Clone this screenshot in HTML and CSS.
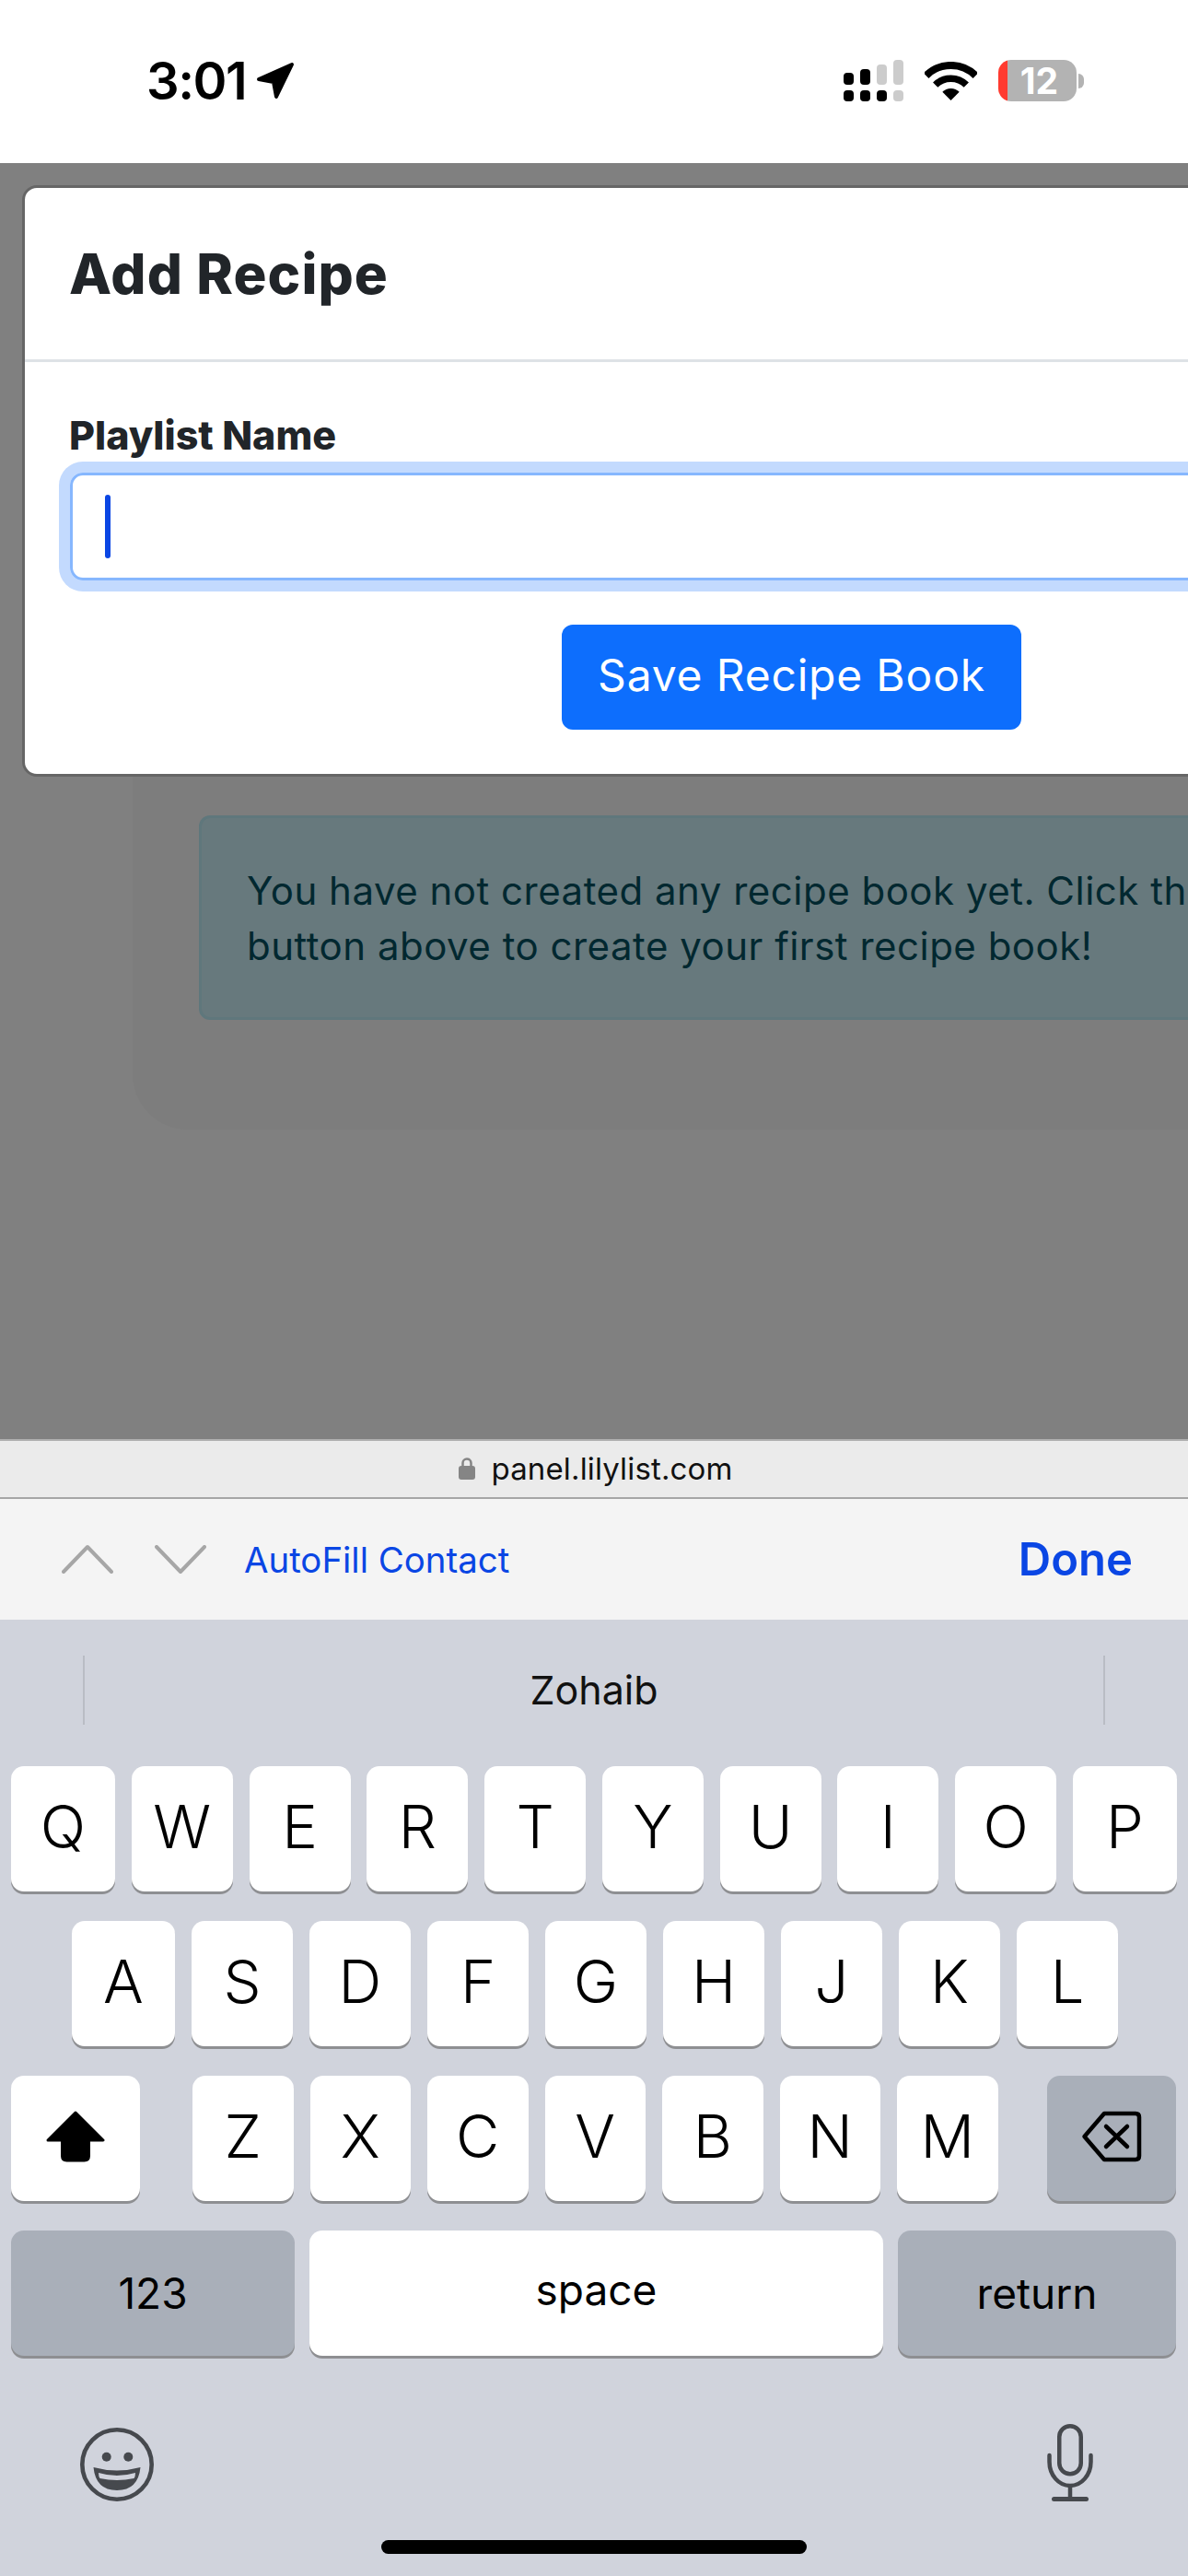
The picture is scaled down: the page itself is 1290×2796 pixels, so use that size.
FILE: index.html
```html
<!DOCTYPE html>
<html lang="en">
  <head>
    <meta charset="UTF-8" />
    <meta name="viewport" content="width=device-width, initial-scale=1.0" />
    <title>Add Recipe</title>
    <link rel="stylesheet" href="styles.css">
  </head>
  <body>
    <!-- STATUS BAR -->
    <header class="status-bar">
      <div class="status-left">
        <span class="time">3:01</span>
        <svg class="location" width="44" height="44" viewBox="0 0 44 44">
          <path d="M4 20 L40 4 L23 39 L20 23 Z" fill="#000" stroke="#000" stroke-width="4" stroke-linejoin="round" />
        </svg>
      </div>
      <div class="status-right">
        <svg class="signal" width="65" height="45" viewBox="0 0 65 45">
          <rect x="0" y="33" width="11" height="12" rx="4" fill="#000" />
          <rect x="18" y="33" width="11" height="12" rx="4" fill="#000" />
          <rect x="36" y="33" width="11" height="12" rx="4" fill="#000" />
          <rect x="54" y="33" width="11" height="12" rx="4" fill="#ccc" />
          <rect x="0" y="14" width="11" height="13" rx="4" fill="#000" />
          <rect x="18" y="10" width="11" height="17" rx="4" fill="#000" />
          <rect x="36" y="5" width="11" height="22" rx="4" fill="#ccc" />
          <rect x="54" y="0" width="11" height="27" rx="4" fill="#ccc" />
        </svg>
        <svg class="wifi" width="57" height="42" viewBox="0 0 57 42">
          <path d="M1.6 15.1 A38 38 0 0 1 55.4 15.1" fill="none" stroke="#000" stroke-width="8" />
          <path d="M11.7 25.2 A23.75 23.75 0 0 1 45.3 25.2" fill="none" stroke="#000" stroke-width="7.5" />
          <path d="M28.5 42 L19.3 32.8 A13 13 0 0 1 37.7 32.8 Z" fill="#000" />
        </svg>
        <div class="battery">
          <div class="battery-body">12</div>
          <div class="battery-cap"></div>
        </div>
      </div>
    </header>

    <!-- PAGE BEHIND THE BACKDROP, WITH THE MODAL ON TOP -->
    <main class="page">
      <section class="panel">
        <div class="alert">
          You have not created any recipe book yet. Click the<br>
          button above to create your first recipe book!
        </div>
      </section>

      <div class="modal">
        <div class="modal-header">
          <h5 class="modal-title">Add Recipe</h5>
        </div>
        <div class="modal-body">
          <label class="form-label">Playlist Name</label>
          <div class="form-input"><span class="caret"></span></div>
          <div class="modal-footer">
            <button class="btn-save">Save Recipe Book</button>
          </div>
        </div>
      </div>
    </main>

    <!-- SAFARI URL BAR AND FORM TOOLBAR -->
    <div class="url-bar">
      <svg class="lock" width="18" height="25" viewBox="0 0 18 25">
        <path d="M4.5 12 V7 a4.5 4.5 0 0 1 9 0 V12" fill="none" stroke="#858585" stroke-width="2.5" />
        <rect x="0" y="10" width="18" height="15" rx="3" fill="#858585" />
      </svg>
      <span class="url-text">panel.lilylist.com</span>
    </div>
    <div class="toolbar">
      <svg class="chevron" width="56" height="32" viewBox="0 0 56 32">
        <path d="M2 30 L28 3 L54 30" fill="none" stroke="#a6a6a6" stroke-width="4" stroke-linecap="round" stroke-linejoin="round" />
      </svg>
      <svg class="chevron chevron-down" width="56" height="32" viewBox="0 0 56 32">
        <path d="M2 2 L28 29 L54 2" fill="none" stroke="#a6a6a6" stroke-width="4" stroke-linecap="round" stroke-linejoin="round" />
      </svg>
      <span class="autofill">AutoFill Contact</span>
      <span class="done">Done</span>
    </div>

    <!-- KEYBOARD -->
    <div class="keyboard">
      <div class="suggestions">
        <div class="suggestion">Zohaib</div>
      </div>
      <div class="rows">
        <div class="row row-1">
          <div class="key key-edge">Q</div>
          <div class="key">W</div>
          <div class="key">E</div>
          <div class="key">R</div>
          <div class="key">T</div>
          <div class="key">Y</div>
          <div class="key">U</div>
          <div class="key">I</div>
          <div class="key">O</div>
          <div class="key key-edge">P</div>
        </div>
        <div class="row row-2">
          <div class="key key-a">A</div>
          <div class="key">S</div>
          <div class="key">D</div>
          <div class="key">F</div>
          <div class="key">G</div>
          <div class="key">H</div>
          <div class="key">J</div>
          <div class="key">K</div>
          <div class="key">L</div>
        </div>
        <div class="row row-3">
          <div class="key key-shift">
            <svg width="64" height="56" viewBox="0 0 64 56">
              <path d="M32 2 L62 32 H46.5 V49 q0 5 -5 5 H22.5 q-5 0 -5 -5 V32 H2 Z" fill="#000" stroke="#000" stroke-width="3" stroke-linejoin="round" />
            </svg>
          </div>
          <div class="letters">
            <div class="key">Z</div>
            <div class="key">X</div>
            <div class="key">C</div>
            <div class="key">V</div>
            <div class="key">B</div>
            <div class="key">N</div>
            <div class="key">M</div>
          </div>
          <div class="key key-delete">
            <svg width="66" height="56" viewBox="0 0 66 56">
              <path d="M3.5 28 L25 3 H59 Q63 3 63 7 V49 Q63 53 59 53 H25 Z" fill="none" stroke="#000" stroke-width="4.5" stroke-linejoin="round" />
              <path d="M27 17 L50 39 M50 17 L27 39" fill="none" stroke="#000" stroke-width="4.5" stroke-linecap="round" />
            </svg>
          </div>
        </div>
        <div class="row row-4">
          <div class="key key-num">123</div>
          <div class="key key-space">space</div>
          <div class="key key-return">return</div>
        </div>
      </div>
      <div class="bottom-icons">
        <svg class="emoji" width="80" height="80" viewBox="0 0 80 80">
          <circle cx="40" cy="40" r="37.7" fill="none" stroke="#46494e" stroke-width="4.6" />
          <circle cx="28.7" cy="31.7" r="5" fill="#46494e" />
          <circle cx="52.3" cy="31.7" r="5" fill="#46494e" />
          <path d="M14.5 43 Q40 50 65.5 43 Q63 68 40 68 Q17 68 14.5 43 Z" fill="#46494e" />
          <path d="M20 49 Q40 55 60 49 Q60 53 58.5 55 Q40 59 21.5 55 Q20 53 20 49 Z" fill="#d0d3dc" />
        </svg>
        <svg width="56" height="85" viewBox="0 0 56 85">
          <rect x="16.25" y="2.25" width="23.5" height="52" rx="11.75" fill="none" stroke="#46494e" stroke-width="4.5" />
          <path d="M5.5 34 V41 A22.5 26 0 0 0 50.5 41 V34" fill="none" stroke="#46494e" stroke-width="4.5" stroke-linecap="round" />
          <path d="M28 67 V81" fill="none" stroke="#46494e" stroke-width="4.5" />
          <path d="M10.5 81.5 H45.5" fill="none" stroke="#46494e" stroke-width="5" stroke-linecap="round" />
        </svg>
      </div>
      <div class="home-indicator"></div>
    </div>
  </body>
</html>
```

FILE: styles.css
```css
/* Global Styles */
* {
  box-sizing: border-box;
}
html,
body {
  margin: 0;
  padding: 0;
}
body {
  width: 1290px;
  height: 2796px;
  overflow: hidden;
  font-family: "Inter", "Liberation Sans", sans-serif;
  background: #d0d3dc;
  color: #000;
}

/* STATUS BAR */
.status-bar {
  height: 177px;
  background: #fff;
  display: flex;
  justify-content: space-between;
  align-items: center;
  padding: 0 113px 2px 159px;
}
.status-left {
  display: flex;
  align-items: center;
  gap: 10px;
}
.time {
  font-size: 56px;
  font-weight: 600;
  line-height: 56px;
  letter-spacing: -1.5px;
}
.status-right {
  display: flex;
  align-items: center;
}
.signal {
  margin-right: 23px;
}
.wifi {
  margin-right: 23px;
}
.battery {
  display: flex;
  align-items: center;
  gap: 2px;
}
.battery-body {
  width: 85px;
  height: 45px;
  border-radius: 14px;
  background: linear-gradient(90deg, #ff3b30 10px, #b3b3b3 10px);
  color: #fff;
  font-size: 39px;
  font-weight: 700;
  line-height: 45px;
  text-align: center;
  padding-left: 4px;
}
.battery-cap {
  width: 6px;
  height: 16px;
  background: #b3b3b3;
  border-radius: 0 8px 8px 0;
}

/* PAGE + BACKDROP */
.page {
  position: relative;
  height: 1385px;
  background: #808080;
  overflow: hidden;
}
.panel {
  width: 1400px;
  margin: 100px 0 0 144px;
  padding: 608px 0 119px 72px;
  background: #7d7d7d;
  border-radius: 0 0 0 60px;
}
.alert {
  width: 1300px;
  height: 222px;
  padding: 49px 50px 0 49px;
  background: #67797d;
  border: 3px solid #5f777c;
  border-radius: 12px;
  color: #022830;
  font-size: 42px;
  letter-spacing: 0.5px;
  line-height: 60px;
  white-space: nowrap;
}

/* MODAL */
.modal {
  position: absolute;
  left: 24px;
  top: 24px;
  width: 1671px;
  background: #fff;
  border: 3px solid #666;
  border-radius: 16px;
  color: #212529;
}
.modal-header {
  height: 189px;
  border-bottom: 3px solid #dee2e6;
  padding: 0 48px;
  display: flex;
  align-items: center;
}
.modal-title {
  margin: 0;
  font-size: 60px;
  font-weight: 800;
  letter-spacing: 1.1px;
  line-height: 1;
}
.modal-body {
  padding: 54px 49px 48px;
}
.form-label {
  display: block;
  margin-left: -1px;
  font-size: 43px;
  font-weight: 800;
  line-height: 50px;
  margin-bottom: 16px;
}
.form-input {
  height: 117px;
  border: 3px solid #86b7fe;
  border-radius: 14px;
  box-shadow: 0 0 0 12px #c3dafe;
  padding: 21px 35px;
}
.caret {
  display: block;
  width: 6px;
  height: 69px;
  background: #0a46e4;
  border-radius: 3px;
}
.modal-footer {
  display: flex;
  justify-content: center;
  margin-top: 48px;
}
.btn-save {
  width: 499px;
  height: 114px;
  padding: 0 0 5px;
  border: none;
  border-radius: 12px;
  background: #0d6efd;
  color: #fff;
  font-family: inherit;
  font-size: 48px;
  font-weight: 400;
  letter-spacing: 0.8px;
}

/* URL BAR + TOOLBAR */
.url-bar {
  height: 65px;
  background: #ebebeb;
  border-top: 2px solid #b0b0b0;
  border-bottom: 2px solid #a6a6a6;
  display: flex;
  justify-content: center;
  align-items: center;
  gap: 17px;
  padding-left: 4px;
  padding-bottom: 2px;
}
.url-text {
  font-size: 33px;
  letter-spacing: 0.15px;
  color: #111;
}
.toolbar {
  height: 131px;
  background: #f4f4f4;
  display: flex;
  align-items: center;
  padding: 0 60px 0 67px;
}
.chevron {
  margin-bottom: 2px;
}
.chevron-down {
  margin-left: 45px;
  margin-top: 3px;
}
.autofill {
  margin-left: 41px;
  font-size: 38.4px;
  color: #0a46e4;
}
.done {
  margin-left: auto;
  font-size: 49px;
  font-weight: 600;
  color: #0a46e4;
}

/* KEYBOARD */
.suggestions {
  height: 159px;
  padding: 39px 90px 0;
}
.suggestion {
  height: 75px;
  border-left: 2px solid #b9bcc4;
  border-right: 2px solid #b9bcc4;
  font-size: 43px;
  line-height: 75px;
  text-align: center;
  color: #111;
}
.rows {
  display: flex;
  flex-direction: column;
  gap: 32px;
}
.row {
  display: flex;
  justify-content: space-between;
}
.row-1 {
  padding: 0 12px;
}
.row-2 {
  padding: 0 76px 0 78px;
}
.row-3 {
  padding: 0 13px 0 12px;
}
.row-4 {
  padding: 0 13px 0 12px;
}
.letters {
  display: flex;
  gap: 18px;
  margin-left: 57px;
  margin-right: auto;
}
.key {
  width: 110px;
  height: 136px;
  background: #fff;
  border-radius: 14px;
  box-shadow: 0 3px 0 #8e8f92;
  display: flex;
  justify-content: center;
  align-items: center;
  font-size: 65px;
  font-weight: 300;
  line-height: 1;
  padding-bottom: 5px;
}
.letters .key {
  width: 109.5px;
}
.key-edge {
  width: 113px;
}
.key-a {
  width: 112px;
}
.key-shift {
  width: 140px;
  padding-bottom: 4px;
}
.key-delete {
  width: 140px;
  background: #a9afb9;
  padding-bottom: 4px;
}
.key-num {
  width: 308px;
  background: #a9afb9;
  font-size: 46px;
  font-weight: 400;
  padding-bottom: 0;
}
.key-space {
  width: 623px;
  font-size: 46px;
  font-weight: 400;
  padding-bottom: 8px;
}
.key-return {
  width: 302px;
  background: #a9afb9;
  font-size: 46px;
  font-weight: 400;
  padding-bottom: 0;
}
.bottom-icons {
  display: flex;
  justify-content: space-between;
  align-items: flex-start;
  padding: 0 100px 0 87px;
  margin-top: 74px;
}
.emoji {
  margin-top: 4px;
}
.home-indicator {
  width: 462px;
  height: 15px;
  margin: 41px auto 0;
  background: #000;
  border-radius: 8px;
}
```
